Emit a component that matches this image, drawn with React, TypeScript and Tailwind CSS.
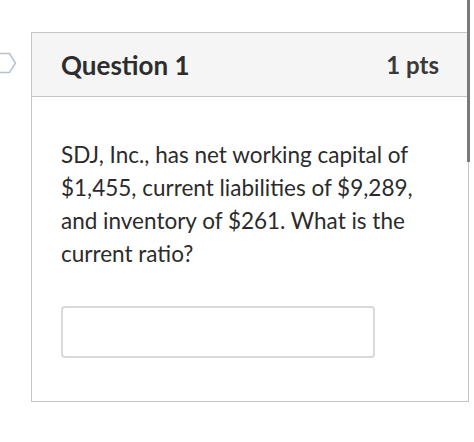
export default function App() {
  return (
    <div className="relative h-[442px] w-[474px] overflow-hidden bg-white font-['Lato','Liberation_Sans',sans-serif] text-[#333]">
      {/* question nav arrow */}
      <svg className="absolute left-0 top-[52px]" width="18" height="22" viewBox="0 0 18 22">
        <path d="M-6 1.5 H9.5 L15.5 11 L9.5 20.5 H-6" fill="#fff" stroke="#b8c2cc" strokeWidth="1.5" />
      </svg>
      {/* scrollbar */}
      <div className="absolute right-[4px] top-0 h-[162px] w-[3px] bg-[#7a7a7a]" />

      <div className="ml-[31px] mt-[32px] w-[438px] border border-[#c4c4c4]">
        <div className="flex h-[64px] items-center justify-between border-b border-[#c4c4c4] bg-[#f5f5f5] pl-[29px] pr-[29px]">
          <h2 className="text-[26px] font-bold leading-none text-[#2d2d2d]">Question 1</h2>
          <span className="text-[24px] font-bold leading-none text-[#3a3a3a]">1 pts</span>
        </div>
        <div className="px-[29px] pb-[43px] pt-[41px]">
          <p className="text-[22.5px] leading-[33px] text-[#2b2b2b]">
            SDJ, Inc., has net working capital of $1,455, current liabilities of $9,289, and inventory of $261. What is the current ratio?
          </p>
          <input
            type="text"
            className="mt-[36px] block h-[52px] w-[314px] rounded-[4px] border-2 border-[#d9d9d9] bg-white"
          />
        </div>
      </div>
    </div>
  )
}
